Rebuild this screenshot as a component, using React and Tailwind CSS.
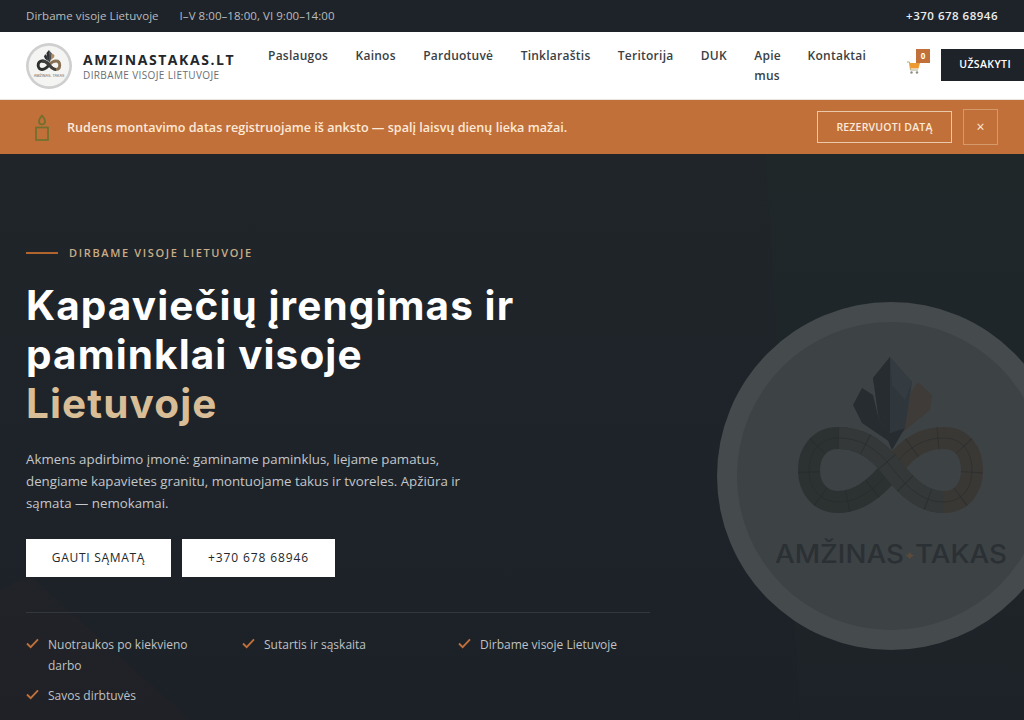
import React from 'react';

const navItems = ['Paslaugos', 'Kainos', 'Parduotuvė', 'Tinklaraštis', 'Teritorija', 'DUK', 'Apie mus', 'Kontaktai'];
const features = ['Nuotraukos po kiekvieno darbo', 'Sutartis ir sąskaita', 'Dirbame visoje Lietuvoje', 'Savos dirbtuvės'];

const leftLoop = 'M892 468 C875 490 858 502 838 502 C820 502 809 488 809 470 C809 452 820 438 838 438 C858 438 875 446 892 468';
const rightLoop = 'M892 468 C909 446 924 438 944 438 C962 438 972 452 972 470 C972 488 962 502 944 502 C924 502 909 490 892 468';
const topBand = 'M838 438 C858 438 875 446 892 468 C909 490 924 502 944 502';

const Band = ({ d, color, mortar }) => (
  <>
    <path d={d} fill="none" stroke={color} strokeWidth="22" />
    <path d={d} fill="none" stroke={mortar} strokeWidth="22" strokeDasharray="1 27" opacity="0.55" />
    <path d={d} fill="none" stroke={mortar} strokeWidth="1" opacity="0.55" />
  </>
);

const LogoMark = ({ c, className }) => (
  <svg viewBox="717 302 348 348" className={className}>
    <circle cx="891" cy="476" r="174" fill={c.ring} />
    <circle cx="891" cy="476" r="154" fill={c.fill} />
    <polygon points="862,388 853,405 862,423 890,442 879,420 873,395" fill={c.shade} />
    <polygon points="918,382 932,395 930,410 903,432 911,392" fill={c.brown} />
    <polygon points="890,357 873,378 879,420 890,433 905,428 912,382" fill={c.crystal} />
    <polygon points="890,357 873,378 879,420 890,433" fill={c.shade} />
    <polygon points="890,357 912,382 905,400 892,385" fill={c.light} />
    <polygon points="879,420 890,433 905,428 892,450" fill={c.shade} />
    <Band d={rightLoop} color={c.right} mortar={c.mortar} />
    <Band d={leftLoop} color={c.left} mortar={c.mortar} />
    <Band d={topBand} color={c.top} mortar={c.mortar} />
    <text x="775" y="563" textLength="232" lengthAdjust="spacingAndGlyphs" fontFamily="Inter, sans-serif" fontSize="25" fontWeight="500" fill={c.text}>
      AMŽINAS<tspan fill={c.star} fontSize="12" dy="-3">✦</tspan><tspan dy="3">TAKAS</tspan>
    </text>
  </svg>
);

const smallLogo = {
  ring: '#cfcfcf', fill: '#f4f4f2', shade: '#2d3033', crystal: '#4a4d50', light: '#5a5d60', brown: '#b0895f',
  left: '#2b2f2c', right: '#8a7355', top: '#3d3f3c', mortar: '#55534e', text: '#777777', star: '#b0895f',
};
const bigLogo = {
  ring: '#454a4d', fill: '#3d4245', shade: '#272c31', crystal: '#2f363c', light: '#343b41', brown: '#3f3b38',
  left: '#2c3131', right: '#3a3835', top: '#343838', mortar: '#262a2b', text: '#2b3034', star: '#5a4a3a',
};

const Check = () => (
  <svg viewBox="0 0 14 12" className="w-[13px] h-[11px] mt-[4px] shrink-0" fill="none" stroke="#c27039" strokeWidth="2">
    <path d="M1 6 L5 10 L13 1.5" />
  </svg>
);

const App = () => {
  return (
    <div className="w-[1024px] h-[720px] overflow-hidden bg-[#1e2329] font-['Open_Sans',sans-serif]">
      {/* top bar */}
      <div className="h-8 bg-[#1e2329] px-[26px] flex items-center justify-between text-[11.5px] tracking-[0.05px] text-[#b9bcbe]">
        <div className="flex gap-[21px]">
          <span>Dirbame visoje Lietuvoje</span>
          <span>I–V 8:00–18:00, VI 9:00–14:00</span>
        </div>
        <span className="font-semibold text-[#eceded] tracking-[0.5px]">+370 678 68946</span>
      </div>

      {/* header */}
      <div className="h-[68px] bg-white pl-[26px] flex w-[1029px] border-b border-[#e8e4df]">
        <LogoMark className="w-[46px] h-[46px] mt-[11px] shrink-0" c={smallLogo} />
        <div className="ml-[11px] mt-[18px] w-[160px] shrink-0">
          <div className="text-[14px] leading-[19px] font-bold tracking-[1.55px] text-[#23272c]">AMZINASTAKAS.LT</div>
          <div className="text-[10px] leading-[13px] tracking-[0.38px] text-[#6a6e74]">DIRBAME VISOJE LIETUVOJE</div>
        </div>
        <nav className="ml-[25px] mt-[14px] flex items-start gap-[27.35px] text-[12px] leading-5 font-semibold tracking-[0.25px] text-[#3a3f45]">
          {navItems.map((item) => (
            <a key={item} className={item === 'Apie mus' ? 'w-[26px]' : 'whitespace-nowrap'}>
              {item}
            </a>
          ))}
        </nav>
        <div className="relative ml-[41px] mt-[17px] w-[23px] h-6 shrink-0">
          <svg viewBox="0 0 13 13" className="absolute left-0 top-[12px] w-[13px] h-[13px]">
            <path d="M0 1 H2.5 L3.5 9 H11" fill="none" stroke="#b0a98a" strokeWidth="1" />
            <path d="M2.5 2 H13 L11.5 7.5 H3.3 Z" fill="#ee9a33" />
            <circle cx="4.5" cy="11.5" r="1.2" fill="#8b8f80" />
            <circle cx="10" cy="11.5" r="1.2" fill="#8b8f80" />
          </svg>
          <span className="absolute left-[9px] top-0 w-[14px] h-[14px] bg-[#c27039] text-white text-[8px] font-bold leading-[14px] text-center">0</span>
        </div>
        <button className="ml-[11px] mt-[17px] w-[88px] h-8 shrink-0 bg-[#1e2329] text-white text-[10.5px] font-semibold tracking-[0.4px]">UŽSAKYTI</button>
      </div>

      {/* banner */}
      <div className="h-[54px] bg-[#c27039] pl-[35px] pr-[26px] flex items-center">
        <svg viewBox="0 0 14 27" className="w-[14px] h-[27px] shrink-0" fill="none" stroke="#6e7030" strokeWidth="1.7">
          <rect x="1" y="13.5" width="12" height="12.5" />
          <path d="M7 1.5 C9.5 4.5 10 6 10 7.5 A3 3 0 0 1 4 7.5 C4 6 4.5 4.5 7 1.5 Z" />
        </svg>
        <p className="ml-[18px] mt-[2px] text-[12.6px] font-semibold text-[#fbe9d8]">Rudens montavimo datas registruojame iš anksto — spalį laisvų dienų lieka mažai.</p>
        <button className="ml-auto w-[135px] h-8 pt-px border border-[#e9c9aa] text-[#fbe9d8] text-[10.5px] font-semibold tracking-[0.2px]">REZERVUOTI DATĄ</button>
        <button className="ml-[11px] w-[35px] h-9 border border-[#d59a6c] text-[#fbe9d8] text-[14px] leading-none">×</button>
      </div>

      {/* hero */}
      <div className="relative h-[566px] overflow-hidden bg-[linear-gradient(180deg,#1f2529_0%,#1e2329_60%,#1c2027_100%)] pl-[26px] pt-[90px]">
        <svg viewBox="0 0 1024 566" className="absolute left-0 top-0 w-[1024px] h-[566px]">
          <polygon points="765,0 1024,0 1024,566 800,566" fill="#2a3a30" opacity="0.1" />
          <polygon points="0,436 30,421 190,566 0,566" fill="#3a2e28" opacity="0.14" />
        </svg>
        <div className="absolute left-[717px] top-[148px]">
          <LogoMark className="w-[348px] h-[348px]" c={bigLogo} />
        </div>

        <div className="relative w-[624px]">
          <div className="flex items-center gap-[11px]">
            <span className="w-8 h-[1.5px] bg-[#b0652f]" />
            <span className="text-[11px] leading-[18px] font-semibold tracking-[1.65px] text-[#c9ad88]">DIRBAME VISOJE LIETUVOJE</span>
          </div>
          <h1 className="mt-[19px] font-['Inter',sans-serif] text-[40.5px] leading-[49px] font-bold tracking-[1.1px] text-white">
            Kapaviečių įrengimas ir<br />paminklai visoje<br /><span className="text-[#d8bd96]">Lietuvoje</span>
          </h1>
          <p className="mt-[20px] w-[450px] text-[13.3px] leading-[22px] text-[#c4c7c9]">
            Akmens apdirbimo įmonė: gaminame paminklus, liejame pamatus, dengiame kapavietes granitu, montuojame takus ir tvoreles. Apžiūra ir sąmata — nemokamai.
          </p>
          <div className="mt-[25px] flex gap-[11px]">
            <button className="w-[145px] h-[38px] bg-white text-[#23272c] text-[12px] font-medium tracking-[0.7px]">GAUTI SĄMATĄ</button>
            <button className="w-[153px] h-[38px] bg-white text-[#23272c] text-[12px] font-medium tracking-[0.9px]">+370 678 68946</button>
          </div>
          <div className="mt-[35px] border-t border-[#33383e] pt-[21px] grid grid-cols-[216px_216px_1fr] gap-y-[9px]">
            {features.map((f) => (
              <div key={f} className="flex gap-[9px] w-[175px] text-[12px] leading-[21px] text-[#bfc2c4]">
                <Check />
                <span>{f}</span>
              </div>
            ))}
          </div>
        </div>
      </div>
    </div>
  );
};

export default App;
